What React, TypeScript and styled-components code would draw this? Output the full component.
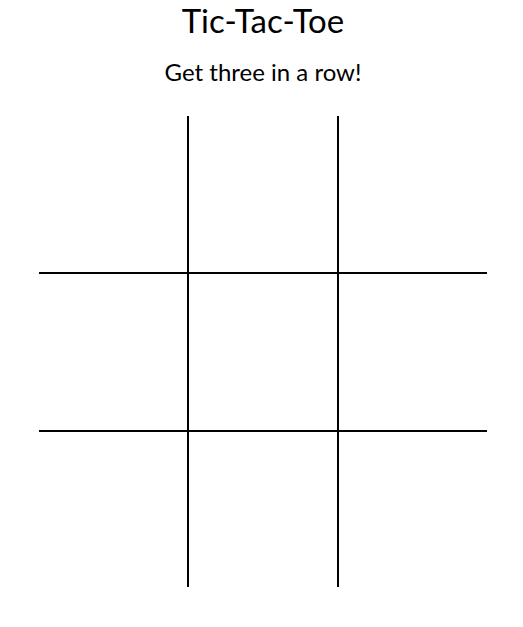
import React from "react";
import styled, { createGlobalStyle } from "styled-components";

const GlobalStyle = createGlobalStyle`
  body {
    margin: 0;
    background: #fff;
    font-family: Lato, "Open Sans", sans-serif;
    color: #000;
  }
`;

const Page = styled.div`
  display: flex;
  flex-direction: column;
  align-items: center;
  padding-left: 3px;
`;

const Title = styled.h1`
  margin: 0;
  font-size: 33px;
  font-weight: 400;
  line-height: 40px;
`;

const Subtitle = styled.h2`
  margin: 17px 0 29px;
  font-size: 24px;
  font-weight: 400;
  line-height: 30px;
`;

const Board = styled.div`
  display: grid;
  grid-template-columns: 150px 150px 148px;
  grid-template-rows: 158px 158px 155px;
  width: 448px;
`;

const Cell = styled.div<{ $right: boolean; $bottom: boolean }>`
  box-sizing: border-box;
  border-right: ${(p) => (p.$right ? "2px solid #000" : "none")};
  border-bottom: ${(p) => (p.$bottom ? "2px solid #000" : "none")};
  display: flex;
  align-items: center;
  justify-content: center;
  font-size: 80px;
  cursor: pointer;
`;

export default function App() {
  const cells = Array.from({ length: 9 }, (_, i) => i);
  return (
    <>
      <GlobalStyle />
      <Page>
        <Title>Tic-Tac-Toe</Title>
        <Subtitle>Get three in a row!</Subtitle>
        <Board>
          {cells.map((i) => (
            <Cell key={i} $right={i % 3 < 2} $bottom={i < 6} />
          ))}
        </Board>
      </Page>
    </>
  );
}
